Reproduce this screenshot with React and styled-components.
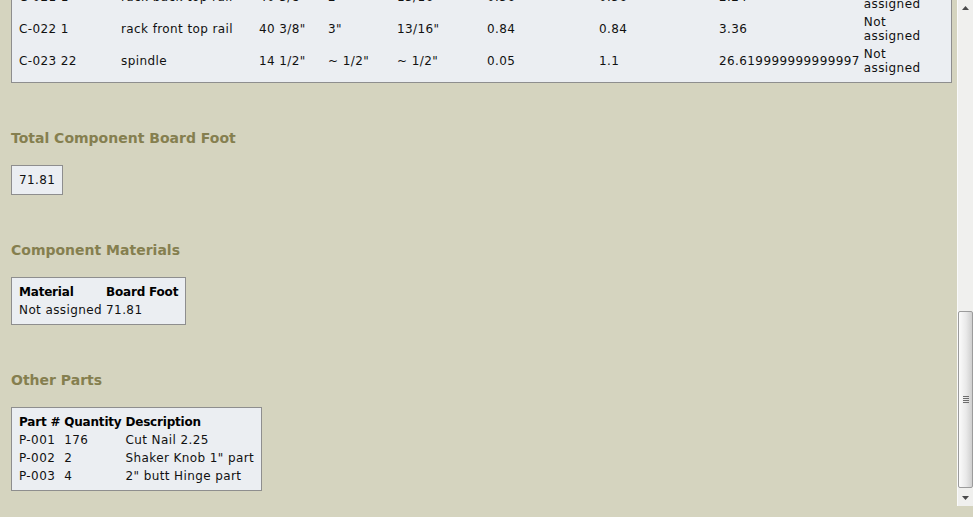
import React, { useLayoutEffect, useRef } from "react";
import styled, { createGlobalStyle } from "styled-components";

const GlobalStyle = createGlobalStyle`
  html, body {
    margin: 0;
    padding: 0;
    background: #d5d4bf;
    overflow: hidden;
  }
  body {
    font-family: "DejaVu Sans", Verdana, sans-serif;
    font-size: 12px;
    color: #111;
  }
`;

// Data
const components = [
  ["C-021 1", "rack back top rail", '40 3/8"', '2"', '13/16"', "0.56", "0.56", "2.24", "Not assigned"],
  ["C-022 1", "rack front top rail", '40 3/8"', '3"', '13/16"', "0.84", "0.84", "3.36", "Not assigned"],
  ["C-023 22", "spindle", '14 1/2"', "~ 1/2\"", "~ 1/2\"", "0.05", "1.1", "26.619999999999997", "Not assigned"],
];

const componentCols = [100, 136, 67, 67, 88, 110, 118, 142, 60];

const parts = [
  ["P-001", "176", "Cut Nail 2.25"],
  ["P-002", "2", 'Shaker Knob 1" part'],
  ["P-003", "4", '2" butt Hinge part'],
];

const App = () => {
  const viewRef = useRef(null);
  const rowRef = useRef(null);

  // page is shown scrolled down to the end of the components table
  useLayoutEffect(() => {
    const view = viewRef.current;
    const row = rowRef.current;
    if (!view || !row) return;
    view.scrollTop =
      row.getBoundingClientRect().top - view.getBoundingClientRect().top - 14;
  }, []);

  return (
    <>
      <GlobalStyle />
      <Page>
        <Viewport ref={viewRef}>
          <Content>
            <Heading>Components</Heading>
            <Box $full>
              <Table $fixed>
                <colgroup>
                  {componentCols.map((w, i) => (
                    <col key={i} style={{ width: w }} />
                  ))}
                </colgroup>
                <thead>
                  <tr>
                    <th>Component</th>
                    <th>Name</th>
                    <th>Length</th>
                    <th>Width</th>
                    <th>Thickness</th>
                    <th>Board Foot</th>
                    <th>Rough Foot</th>
                    <th>Total Board Foot</th>
                    <th>Material</th>
                  </tr>
                </thead>
                <tbody>
                  {components.map((r, i) => (
                    <tr key={r[0]} ref={i === 1 ? rowRef : null}>
                      {r.map((c, j) => (
                        <td key={j}>{c}</td>
                      ))}
                    </tr>
                  ))}
                </tbody>
              </Table>
            </Box>

            <Heading>Total Component Board Foot</Heading>
            <Box>
              <Table>
                <tbody>
                  <tr>
                    <td>71.81</td>
                  </tr>
                </tbody>
              </Table>
            </Box>

            <Heading>Component Materials</Heading>
            <Box>
              <Table>
                <thead>
                  <tr>
                    <th>Material</th>
                    <th>Board Foot</th>
                  </tr>
                </thead>
                <tbody>
                  <tr>
                    <td>Not assigned</td>
                    <td>71.81</td>
                  </tr>
                </tbody>
              </Table>
            </Box>

            <Heading>Other Parts</Heading>
            <Box>
              <Table>
                <thead>
                  <tr>
                    <th>Part #</th>
                    <th>Quantity</th>
                    <th>Description</th>
                  </tr>
                </thead>
                <tbody>
                  {parts.map((p) => (
                    <tr key={p[0]}>
                      {p.map((c, j) => (
                        <td key={j}>{c}</td>
                      ))}
                    </tr>
                  ))}
                </tbody>
              </Table>
            </Box>
          </Content>
        </Viewport>

        <Scrollbar>
          <ArrowButton>
            <svg width="7" height="4" viewBox="0 0 7 4">
              <path d="M0 4 L3.5 0 L7 4 Z" fill="#4a4a4a" />
            </svg>
          </ArrowButton>
          <Track>
            <Thumb>
              <Grip>
                <span />
                <span />
                <span />
                <span />
              </Grip>
            </Thumb>
          </Track>
          <ArrowButton>
            <svg width="7" height="4" viewBox="0 0 7 4">
              <path d="M0 0 L7 0 L3.5 4 Z" fill="#4a4a4a" />
            </svg>
          </ArrowButton>
        </Scrollbar>
      </Page>
    </>
  );
};

const Page = styled.div`
  display: flex;
  width: 973px;
  height: 517px;
  background: #d5d4bf;
`;

const Viewport = styled.div`
  flex: 1;
  height: 517px;
  overflow: hidden;
`;

const Content = styled.div`
  padding: 8px 5px 60px 11px;
`;

const Heading = styled.h3`
  margin: 47px 0 19px;
  font-size: 14px;
  line-height: 16px;
  font-weight: bold;
  color: #857f4f;
`;

const Box = styled.div`
  width: ${(p) => (p.$full ? "auto" : "fit-content")};
  padding: 4px;
  background: #ebeef2;
  border: 1px solid #8e8e8e;
`;

const Table = styled.table`
  border-spacing: 2px;
  table-layout: ${(p) => (p.$fixed ? "fixed" : "auto")};
  font-size: 12px;
  line-height: 14px;
  color: #111;

  th,
  td {
    padding: 1px;
    text-align: left;
    vertical-align: middle;
  }

  td {
    letter-spacing: 0.4px;
  }

  th {
    font-weight: bold;
    color: #000;
    letter-spacing: -0.2px;
  }
`;

const Scrollbar = styled.div`
  display: flex;
  flex-direction: column;
  width: 16px;
  height: 506px;
  background: #f0f0ee;
  border-left: 1px solid #fafafa;
  box-sizing: border-box;
`;

const ArrowButton = styled.div`
  display: flex;
  align-items: center;
  justify-content: center;
  height: 16px;
  flex-shrink: 0;
`;

const Track = styled.div`
  flex: 1;
  display: flex;
  flex-direction: column;
  justify-content: flex-end;
  padding-bottom: 2px;
`;

const Thumb = styled.div`
  height: 177px;
  border: 1px solid #9c9c9c;
  border-radius: 2px;
  background: linear-gradient(to right, #fbfbfb, #e9e9e9 55%, #cfcfcf);
  display: flex;
  align-items: center;
  justify-content: center;
  box-sizing: border-box;
`;

const Grip = styled.div`
  display: flex;
  flex-direction: column;
  gap: 1px;

  span {
    display: block;
    width: 6px;
    height: 1px;
    background: #6d6d6d;
  }
`;

export default App;
